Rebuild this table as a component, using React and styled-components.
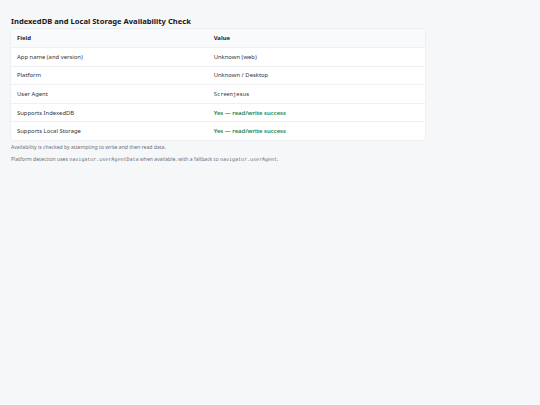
import styled, { createGlobalStyle } from "styled-components";

const GlobalStyle = createGlobalStyle`
  html, body {
    margin: 0;
    padding: 0;
    background: #f6f7f9;
  }
  body {
    font-family: "Noto Sans", "DejaVu Sans", sans-serif;
    color: #1f2328;
  }
`;

const Page = styled.div`
  padding: 16px 11px;
  max-width: 414px;
`;

const Title = styled.h1`
  font-size: 7.6px;
  line-height: 10px;
  font-weight: 700;
  margin: 0 0 3px;
  color: #15181c;
`;

const Card = styled.div`
  background: #fff;
  border-radius: 4px;
  box-shadow: 0 0 0 1px rgba(20, 30, 50, 0.035);
  overflow: hidden;
`;

const Table = styled.table`
  width: 100%;
  border-collapse: collapse;
  font-size: 5.9px;
`;

const HeadCell = styled.th`
  text-align: left;
  font-weight: 700;
  background: #f9fafc;
  padding: 0 6px;
  height: 18px;
  width: ${(p) => (p.$first ? "47.5%" : "auto")};
  color: #1b1e22;
`;

const Row = styled.tr`
  td {
    border-top: 1px solid #eef0f3;
  }
`;

const Cell = styled.td`
  padding: 0 6px;
  height: 17.6px;
  color: ${(p) => (p.$ok ? "#1a7f43" : "#2f3338")};
  font-weight: ${(p) => (p.$ok ? 600 : 400)};
  font-family: ${(p) =>
    p.$mono ? '"DejaVu Sans Mono", "Liberation Mono", monospace' : "inherit"};
  font-size: ${(p) => (p.$mono ? "5.4px" : "inherit")};
`;

const Note = styled.p`
  font-size: 5.1px;
  line-height: 7px;
  color: #6b7078;
  margin: 4px 0 0;
  & + & {
    margin-top: 5px;
  }
`;

const Code = styled.code`
  font-family: "DejaVu Sans Mono", "Liberation Mono", monospace;
  font-size: 5px;
`;

const rows = [
  { field: "App name (and version)", value: "Unknown (web)" },
  { field: "Platform", value: "Unknown / Desktop" },
  { field: "User Agent", value: "Screenjesus", mono: true },
  { field: "Supports IndexedDB", value: "Yes — read/write success", ok: true },
  { field: "Supports Local Storage", value: "Yes — read/write success", ok: true },
];

export default function App() {
  return (
    <>
      <GlobalStyle />
      <Page>
        <Title>IndexedDB and Local Storage Availability Check</Title>
        <Card>
          <Table>
            <thead>
              <tr>
                <HeadCell $first>Field</HeadCell>
                <HeadCell>Value</HeadCell>
              </tr>
            </thead>
            <tbody>
              {rows.map((r) => (
                <Row key={r.field}>
                  <Cell>{r.field}</Cell>
                  <Cell $ok={r.ok} $mono={r.mono}>
                    {r.value}
                  </Cell>
                </Row>
              ))}
            </tbody>
          </Table>
        </Card>
        <Note>Availability is checked by attempting to write and then read data.</Note>
        <Note>
          Platform detection uses <Code>navigator.userAgentData</Code> when available,
          with a fallback to <Code>navigator.userAgent</Code>.
        </Note>
      </Page>
    </>
  );
}
